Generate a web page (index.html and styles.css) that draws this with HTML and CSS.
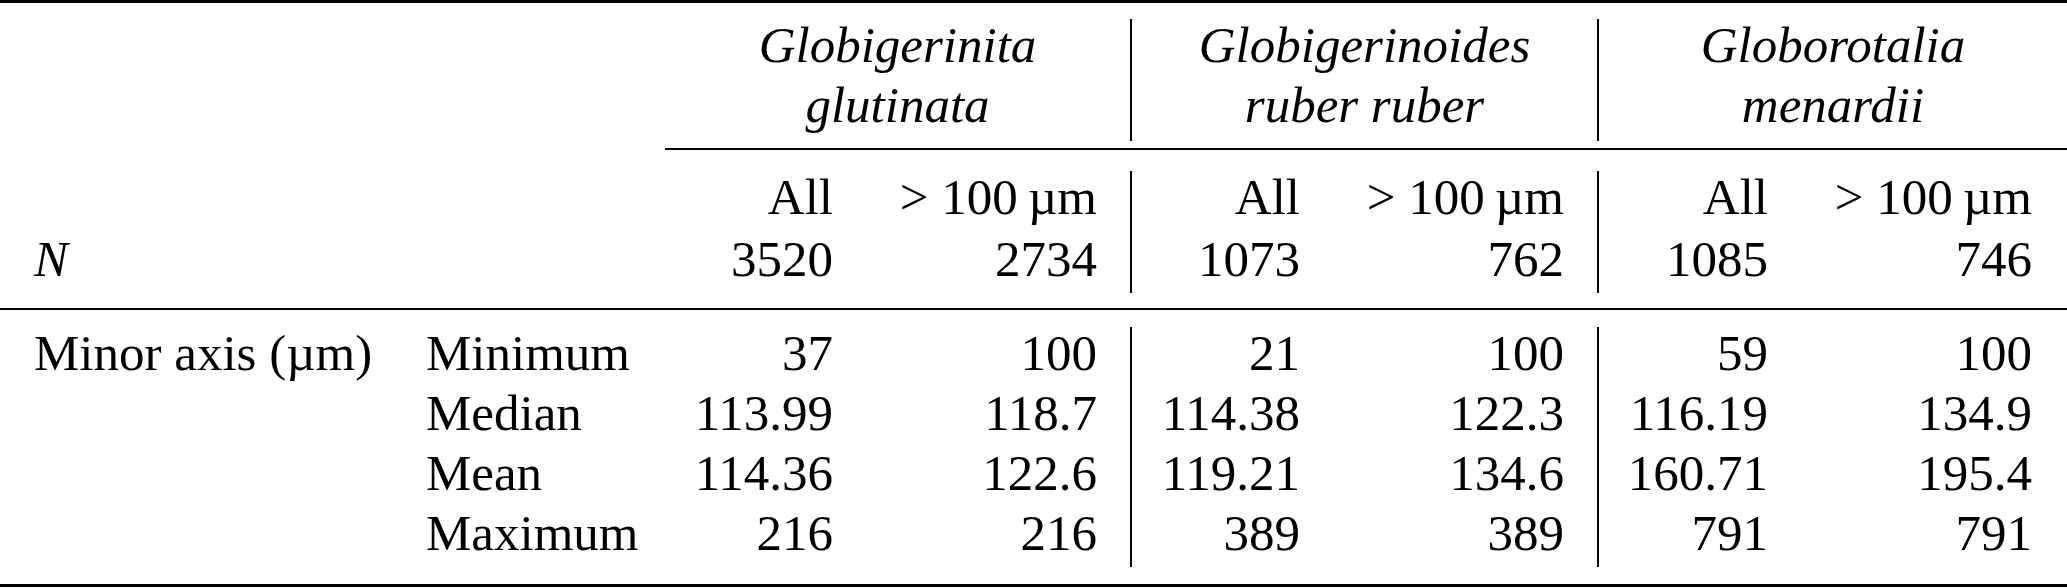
FILE: index.html
```html
<!DOCTYPE html>
<html lang="en">
<head>
    <meta charset="UTF-8">
    <meta name="viewport" content="width=device-width, initial-scale=1.0">
    <title>Foraminifera size statistics</title>
    <link rel="stylesheet" href="styles.css">
</head>
<body>

    <div class="table">
        <!-- species header -->
        <div class="head">
            <div></div>
            <div class="species sep">
                <div class="line">Globigerinita</div>
                <div class="line">glutinata</div>
            </div>
            <div class="species sep">
                <div class="line">Globigerinoides</div>
                <div class="line">ruber ruber</div>
            </div>
            <div class="species">
                <div class="line">Globorotalia</div>
                <div class="line">menardii</div>
            </div>
        </div>

        <div class="cmidrule"></div>

        <!-- subsets and counts -->
        <div class="grid counts">
            <div class="first"></div>
            <div class="second"></div>
            <div class="a">All</div>
            <div class="b sep">&gt;&nbsp;100&thinsp;µm</div>
            <div class="a">All</div>
            <div class="b sep">&gt;&nbsp;100&thinsp;µm</div>
            <div class="a">All</div>
            <div class="b">&gt;&nbsp;100&thinsp;µm</div>

            <div class="first"><i>N</i></div>
            <div class="second"></div>
            <div class="a">3520</div>
            <div class="b sep">2734</div>
            <div class="a">1073</div>
            <div class="b sep">762</div>
            <div class="a">1085</div>
            <div class="b">746</div>
        </div>

        <!-- minor axis statistics -->
        <div class="grid data">
            <div class="first">Minor axis (µm)</div>
            <div class="second">Minimum</div>
            <div class="a">37</div>
            <div class="b sep">100</div>
            <div class="a">21</div>
            <div class="b sep">100</div>
            <div class="a">59</div>
            <div class="b">100</div>

            <div class="first"></div>
            <div class="second">Median</div>
            <div class="a">113.99</div>
            <div class="b sep">118.7</div>
            <div class="a">114.38</div>
            <div class="b sep">122.3</div>
            <div class="a">116.19</div>
            <div class="b">134.9</div>

            <div class="first"></div>
            <div class="second">Mean</div>
            <div class="a">114.36</div>
            <div class="b sep">122.6</div>
            <div class="a">119.21</div>
            <div class="b sep">134.6</div>
            <div class="a">160.71</div>
            <div class="b">195.4</div>

            <div class="first"></div>
            <div class="second">Maximum</div>
            <div class="a">216</div>
            <div class="b sep">216</div>
            <div class="a">389</div>
            <div class="b sep">389</div>
            <div class="a">791</div>
            <div class="b">791</div>
        </div>
    </div>

</body>
</html>
```

FILE: styles.css
```css
* {
    margin: 0;
    padding: 0;
    box-sizing: border-box;
}

body {
    background: #fff;
    color: #000;
    font-family: "Liberation Serif", "Times New Roman", serif;
    font-size: 51px;
}

.table {
    width: 2067px;
    border-top: 3px solid #000;
    border-bottom: 3px solid #000;
}

.head {
    display: grid;
    grid-template-columns: 665px 467px 467px 468px;
    grid-template-rows: 122px;
    padding: 16px 0 7px;
}

.species {
    text-align: center;
    font-style: italic;
}

.species .line {
    height: 60px;
    line-height: 52px;
}

.cmidrule {
    margin-left: 665px;
    border-top: 2px solid #000;
}

.grid {
    display: grid;
    grid-template-columns: 391px 274px 203px 264px 203px 264px 204px 264px;
    grid-auto-rows: 60px;
    line-height: 52px;
    white-space: nowrap;
}

.counts {
    grid-template-rows: 62px 60px;
    padding: 21px 0 15px;
}

.data {
    border-top: 2px solid #000;
    padding: 17px 0;
}

.first {
    padding-left: 34px;
}

.second {
    padding-left: 35px;
}

.a {
    text-align: right;
    padding-right: 35px;
}

.b {
    text-align: right;
    padding-right: 35px;
}

.sep {
    border-right: 2px solid #000;
}

.b.sep {
    padding-right: 33px;
}
```
